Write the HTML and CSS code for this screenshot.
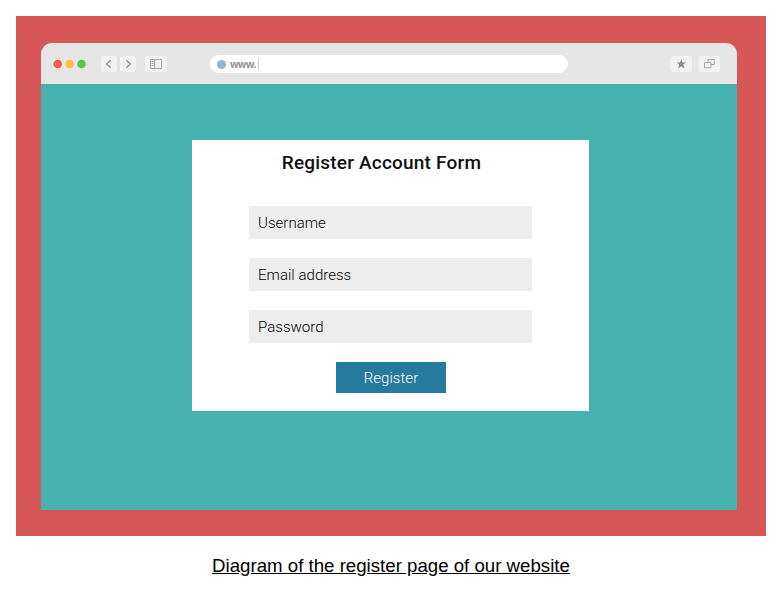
FILE: index.html
```html
<!DOCTYPE html>
<html lang="en">
<head>
<meta charset="utf-8">
<title>Register Account Form</title>
<link rel="stylesheet" href="styles.css">
</head>
<body>
<figure class="diagram">
  <div class="frame">
    <div class="browser">
      <header class="toolbar">
        <svg class="lights" width="34" height="10" viewBox="0 0 34 10"><circle cx="4.7" cy="5" r="4.3" fill="#f55b55"/><circle cx="16.6" cy="5" r="4.3" fill="#fdbe3b"/><circle cx="28.5" cy="5" r="4.3" fill="#55cb42"/></svg>
        <div class="nav">
          <span class="tool"><svg width="16" height="16" viewBox="0 0 16 16"><path d="M9.8 4.2 5.6 8l4.2 3.8"/></svg></span>
          <span class="tool"><svg width="16" height="16" viewBox="0 0 16 16"><path d="M6.2 4.2 10.4 8l-4.2 3.8"/></svg></span>
        </div>
        <span class="tool wide"><svg class="thin" width="22" height="16" viewBox="0 0 22 16"><path d="M5.5 3.5h11v9h-11zM9.5 3.5v9"/><path d="M6.5 5.5h2M6.5 7.5h2M6.5 9.5h2"/></svg></span>
        <div class="address"><span class="site-dot"></span><span class="url">www.</span><span class="caret"></span></div>
        <div class="actions">
          <span class="tool wide"><svg width="22" height="16" viewBox="0 0 22 16"><path class="star" d="m11.3 3 1.3 3.4h3.6l-2.9 2.2 1.1 3.8-3.1-2.2-3.1 2.2 1.1-3.8-2.9-2.2H10z"/></svg></span>
          <span class="tool wide"><svg class="thin" width="22" height="16" viewBox="0 0 22 16"><path d="M10 6V3.5h6.2v5H13M6.5 6.5H13v5.2H6.5z"/></svg></span>
        </div>
      </header>
      <main class="page">
        <form class="form">
          <h1 class="title">Register Account Form</h1>
          <div class="field">Username</div>
          <div class="field">Email address</div>
          <div class="field">Password</div>
          <button class="submit" type="button">Register</button>
        </form>
      </main>
    </div>
  </div>
  <figcaption class="caption">Diagram of the register page of our website</figcaption>
</figure>
</body>
</html>
```

FILE: styles.css
```css
* { box-sizing: border-box; }
body { margin: 0; background: #fff; }
.diagram { margin: 16px 0 0 16px; width: 750px; }
.frame { height: 520px; padding: 27px 29px 26px 25px; background: #d75758; }
.browser { height: 467px; display: flex; flex-direction: column; border-radius: 11px 11px 0 0; overflow: hidden; }
.toolbar { height: 41px; flex: none; display: flex; align-items: center; padding: 1px 17px 0 12px; background: #e6e6e6; }
.lights { display: block; margin-right: 14px; }
.nav { display: flex; gap: 3px; margin-right: 9px; }
.tool { width: 16px; height: 16px; flex: none; border-radius: 2px; background: #f2f2f2; box-shadow: 0 0 1px #d5d5d5; }
.tool.wide { width: 22px; }
.tool svg { display: block; fill: none; stroke: #909090; stroke-width: 1.4; }
.tool .thin { stroke: #a8a8a8; stroke-width: 1; }
.tool .star { fill: #8e8e8e; stroke: none; }
.address { width: 358px; height: 18px; margin-left: 43px; padding-left: 7px; display: flex; align-items: center; border-radius: 9px; background: #fff; }
.site-dot { width: 9px; height: 9px; border-radius: 50%; background: #91b2d4; }
.url { margin-left: 4px; font: bold 10px/16px "Open Sans", sans-serif; letter-spacing: -.7px; color: #929292; }
.caret { width: 1px; height: 12px; margin-left: 2px; background: #d0d0d0; }
.actions { display: flex; gap: 6px; margin-left: auto; }
.page { flex: 1; padding: 56px 0 0 151px; background: #45b2b0; }
.form { width: 397px; height: 271px; padding: 0 57px; background: #fff; font-family: Roboto, sans-serif; }
.title { margin: 0 0 21px; padding: 0 18px 0 0; height: 45px; text-align: center; white-space: nowrap; font-size: 19px; font-weight: 500; line-height: 45px; letter-spacing: .2px; color: #111; }
.field { height: 33px; margin-bottom: 19px; padding-left: 9px; background: #ededed; font-size: 15px; font-weight: 300; line-height: 34px; letter-spacing: .03px; color: #000; }
.submit { display: block; width: 110px; height: 31px; margin: 0 0 0 87px; padding: 1px 0 0; border: 0; background: #267a9e; font: 300 15px/30px Roboto, sans-serif; letter-spacing: .03px; color: #fff; }
.caption { margin-top: 19px; text-align: center; font: 18.67px/22px "Liberation Sans", Arial, sans-serif; text-decoration: underline; color: #000; }
```
